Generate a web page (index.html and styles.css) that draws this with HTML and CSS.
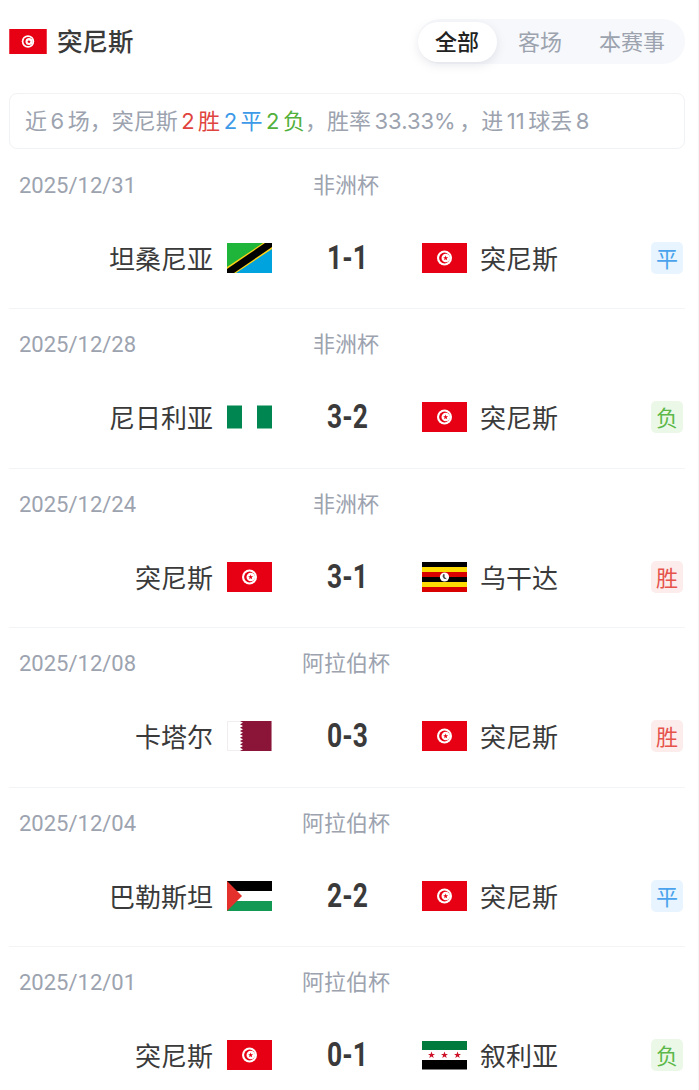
FILE: index.html
```html
<!DOCTYPE html>
<html lang="zh-CN">
<head>
    <meta charset="UTF-8">
    <meta name="viewport" content="width=device-width, initial-scale=1.0">
    <title>突尼斯 近期战绩</title>
    <link rel="stylesheet" href="styles.css">
</head>
<body>
    <svg class="sprite" width="0" height="0">
        <symbol id="flag-tun" viewBox="0 0 45 30">
            <rect width="45" height="30" fill="#e70013"/>
            <circle cx="22.5" cy="15" r="7.5" fill="#fff"/>
            <circle cx="22.5" cy="15" r="5.4" fill="#e70013"/>
            <circle cx="23.8" cy="15" r="4.3" fill="#fff"/>
            <polygon points="23.6,12.6 24.3,14.3 26.1,14.3 24.7,15.4 25.2,17.2 23.6,16.2 22.1,17.2 22.6,15.4 21.2,14.3 23,14.3" fill="#e70013"/>
        </symbol>
        <symbol id="flag-tza" viewBox="0 0 45 30">
            <rect width="45" height="30" fill="#1eb53a"/>
            <polygon points="45,0 45,30 0,30" fill="#00a3dd"/>
            <polygon points="36,0 45,0 45,6 9,30 0,30 0,24" fill="#fcd116"/>
            <polygon points="38,0 45,0 45,4 7,30 0,30 0,26" fill="#000"/>
        </symbol>
        <symbol id="flag-nga" viewBox="0 0 45 30">
            <rect y="3.5" width="15" height="23" fill="#008751"/>
            <rect x="30" y="3.5" width="15" height="23" fill="#008751"/>
        </symbol>
        <symbol id="flag-uga" viewBox="0 0 45 30">
            <rect width="45" height="5" fill="#000"/>
            <rect y="5" width="45" height="5" fill="#fcdc04"/>
            <rect y="10" width="45" height="5" fill="#d90000"/>
            <rect y="15" width="45" height="5" fill="#000"/>
            <rect y="20" width="45" height="5" fill="#fcdc04"/>
            <rect y="25" width="45" height="5" fill="#d90000"/>
            <circle cx="22.5" cy="15" r="4.6" fill="#fff"/>
            <path d="M21 12.2 L22.6 12.2 L22.6 15 L25 17.2 L22 16.8 L20.6 14.6 Z" fill="#444"/>
        </symbol>
        <symbol id="flag-qat" viewBox="0 0 45 30">
            <rect x=".5" y=".5" width="44" height="29" fill="#fff" stroke="#f0eeee"/>
            <polygon points="13,0 44.5,0 44.5,30 13,30 16,28.3 13,26.7 16,25 13,23.3 16,21.7 13,20 16,18.3 13,16.7 16,15 13,13.3 16,11.7 13,10 16,8.3 13,6.7 16,5 13,3.3 16,1.7" fill="#8a1538"/>
        </symbol>
        <symbol id="flag-pse" viewBox="0 0 45 30">
            <rect width="45" height="10" fill="#000"/>
            <rect y="10" width="45" height="10" fill="#fff"/>
            <rect y="20" width="45" height="10" fill="#149954"/>
            <polygon points="0,0 15,15 0,30" fill="#e4312b"/>
        </symbol>
        <symbol id="flag-syr" viewBox="0 0 45 30">
            <rect y="1" width="45" height="9" fill="#007a3d"/>
            <rect y="10" width="45" height="10" fill="#fff"/>
            <rect y="20" width="45" height="9.5" fill="#000"/>
            <polygon points="9.5,11.6 10.4,14 13,14 10.9,15.5 11.7,18 9.5,16.5 7.3,18 8.1,15.5 6,14 8.6,14" fill="#ce1126"/>
            <polygon points="22.5,11.6 23.4,14 26,14 23.9,15.5 24.7,18 22.5,16.5 20.3,18 21.1,15.5 19,14 21.6,14" fill="#ce1126"/>
            <polygon points="35.5,11.6 36.4,14 39,14 36.9,15.5 37.7,18 35.5,16.5 33.3,18 34.1,15.5 32,14 34.6,14" fill="#ce1126"/>
        </symbol>
    </svg>

    <div class="page">
        <div class="header">
            <div class="team-title">
                <svg class="flag-small"><use href="#flag-tun"/></svg>
                <span>突尼斯</span>
            </div>
            <div class="tabs">
                <span class="tab active">全部</span>
                <span class="tab">客场</span>
                <span class="tab">本赛事</span>
            </div>
        </div>

        <div class="summary">近<i>6</i>场，突尼斯<b class="red"><i>2</i>胜</b><b class="blue"><i>2</i>平</b><b class="green"><i>2</i>负</b>，胜率<i>33.33%</i>，进<i>11</i>球丢<i>8</i></div>

        <div class="match-list">
            <div class="match">
                <div class="match-info"><span class="date">2025/12/31</span><span class="league">非洲杯</span></div>
                <div class="match-row">
                    <div class="team home">坦桑尼亚<svg class="flag"><use href="#flag-tza"/></svg></div>
                    <div class="score"><span>1-1</span></div>
                    <div class="team away"><svg class="flag"><use href="#flag-tun"/></svg>突尼斯</div>
                    <span class="result draw">平</span>
                </div>
            </div>

            <div class="match">
                <div class="match-info"><span class="date">2025/12/28</span><span class="league">非洲杯</span></div>
                <div class="match-row">
                    <div class="team home">尼日利亚<svg class="flag"><use href="#flag-nga"/></svg></div>
                    <div class="score"><span>3-2</span></div>
                    <div class="team away"><svg class="flag"><use href="#flag-tun"/></svg>突尼斯</div>
                    <span class="result lose">负</span>
                </div>
            </div>

            <div class="match">
                <div class="match-info"><span class="date">2025/12/24</span><span class="league">非洲杯</span></div>
                <div class="match-row">
                    <div class="team home">突尼斯<svg class="flag"><use href="#flag-tun"/></svg></div>
                    <div class="score"><span>3-1</span></div>
                    <div class="team away"><svg class="flag"><use href="#flag-uga"/></svg>乌干达</div>
                    <span class="result win">胜</span>
                </div>
            </div>

            <div class="match">
                <div class="match-info"><span class="date">2025/12/08</span><span class="league">阿拉伯杯</span></div>
                <div class="match-row">
                    <div class="team home">卡塔尔<svg class="flag"><use href="#flag-qat"/></svg></div>
                    <div class="score"><span>0-3</span></div>
                    <div class="team away"><svg class="flag"><use href="#flag-tun"/></svg>突尼斯</div>
                    <span class="result win">胜</span>
                </div>
            </div>

            <div class="match">
                <div class="match-info"><span class="date">2025/12/04</span><span class="league">阿拉伯杯</span></div>
                <div class="match-row">
                    <div class="team home">巴勒斯坦<svg class="flag"><use href="#flag-pse"/></svg></div>
                    <div class="score"><span>2-2</span></div>
                    <div class="team away"><svg class="flag"><use href="#flag-tun"/></svg>突尼斯</div>
                    <span class="result draw">平</span>
                </div>
            </div>

            <div class="match">
                <div class="match-info"><span class="date">2025/12/01</span><span class="league">阿拉伯杯</span></div>
                <div class="match-row">
                    <div class="team home">突尼斯<svg class="flag"><use href="#flag-tun"/></svg></div>
                    <div class="score"><span>0-1</span></div>
                    <div class="team away"><svg class="flag"><use href="#flag-syr"/></svg>叙利亚</div>
                    <span class="result lose">负</span>
                </div>
            </div>
        </div>
    </div>
</body>
</html>
```

FILE: styles.css
```css
html, body {
    margin: 0;
    padding: 0;
    background: #fff;
    overflow: hidden;
}

body {
    font-family: "Noto Sans CJK SC", sans-serif;
    color: #3a3a3a;
}

.sprite {
    display: block;
}

.page {
    height: 1090px;
    padding: 19px 13px 0 9px;
    border-right: 1px solid #f4f4f5;
    box-sizing: border-box;
    overflow: hidden;
}

.header {
    display: flex;
    justify-content: space-between;
    align-items: center;
    height: 45px;
}

.team-title {
    display: flex;
    align-items: center;
    gap: 10px;
    font-size: 25.5px;
    font-weight: 500;
    line-height: 26px;
}

.team-title span {
    padding-bottom: 4px;
}

.flag-small {
    width: 38px;
    height: 25px;
}

.tabs {
    display: flex;
    align-items: center;
    height: 45px;
    width: 267px;
    background: #f7f8fb;
    border-radius: 22px;
    font-size: 22px;
    color: #9ca3af;
    white-space: nowrap;
}

.tab {
    padding: 0 16px 4px 21px;
    line-height: 36px;
}

.tab.active {
    padding: 0 18px 4px 17px;
    background: #fff;
    border-radius: 20px;
    color: #222;
    font-weight: 500;
    box-shadow: 0 3px 10px rgba(120, 130, 150, 0.18);
}

.summary {
    height: 56px;
    margin-top: 29px;
    padding: 0 15px;
    border: 1px solid #f1f2f4;
    border-radius: 8px;
    box-sizing: border-box;
    font-size: 22px;
    line-height: 50px;
    color: #9ca3af;
    white-space: nowrap;
}

.summary i {
    font-family: Inter, sans-serif;
    font-style: normal;
    margin: 0 3.5px;
}

.summary b {
    font-weight: 400;
}

.red { color: #e0443e; }
.blue { color: #3c9ae8; }
.green { color: #52b03c; }

.match-list {
    margin-top: 1px;
}

.match {
    padding-top: 21px;
    border-bottom: 1px solid #f3f4f6;
    height: 159.4px;
    box-sizing: border-box;
}

.match:last-child {
    border-bottom: none;
}

.match-info {
    display: grid;
    grid-template-columns: 1fr auto 1fr;
    padding: 0 12px 0 10px;
    height: 30px;
    line-height: 30px;
    font-size: 22px;
    color: #9ca3af;
}

.date {
    font-family: Roboto, sans-serif;
}

.league {
    text-align: center;
    line-height: 24px;
}

.match-row {
    display: grid;
    grid-template-columns: 263px 150px 1fr 32px;
    align-items: center;
    height: 32px;
    margin-top: 41px;
    padding-right: 2px;
    font-size: 26px;
    line-height: 32px;
    color: #3a3a3a;
}

.team {
    display: flex;
    align-items: center;
    gap: 14px;
}

.team.home {
    justify-content: flex-end;
}

.team.away {
    gap: 13px;
}

.flag {
    width: 45px;
    height: 30px;
    flex-shrink: 0;
}

.score {
    text-align: center;
    font-family: Roboto, sans-serif;
    font-size: 33px;
    font-weight: 700;
    color: #3a3a3a;
}

.score span {
    display: inline-block;
    transform: scaleX(0.8);
}

.result {
    width: 32px;
    height: 32px;
    line-height: 30px;
    text-align: center;
    border-radius: 5px;
    font-size: 22px;
}

.result.draw {
    background: #e8f4ff;
    color: #4aa3ec;
}

.result.lose {
    background: #ebf8e7;
    color: #5cb84a;
}

.result.win {
    background: #fdecec;
    color: #e5534b;
}
```
